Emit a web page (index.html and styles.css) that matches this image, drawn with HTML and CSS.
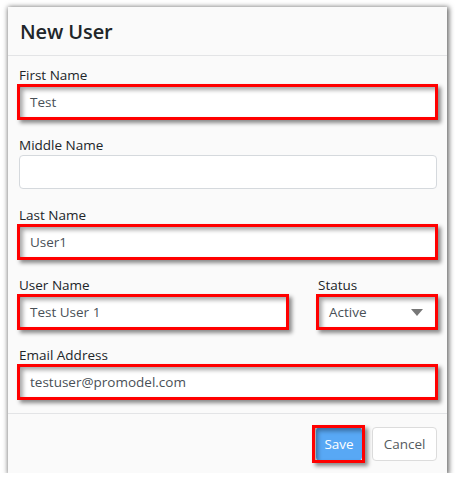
FILE: index.html
```html
<!DOCTYPE html>
<html lang="en">
<head>
<meta charset="utf-8">
<title>New User</title>
<link rel="stylesheet" href="styles.css">
</head>
<body>
<div class="modal">
  <div class="modal-header">
    <h5 class="modal-title">New User</h5>
  </div>
  <div class="modal-body">
    <div class="group">
      <label class="label">First Name</label>
      <div class="mark"><div class="field">Test</div></div>
    </div>
    <div class="group">
      <label class="label">Middle Name</label>
      <div class="field"></div>
    </div>
    <div class="group">
      <label class="label">Last Name</label>
      <div class="mark"><div class="field">User1</div></div>
    </div>
    <div class="group row">
      <div class="col">
        <label class="label">User Name</label>
        <div class="mark"><div class="field">Test User 1</div></div>
      </div>
      <div class="col">
        <label class="label">Status</label>
        <div class="mark"><div class="field select"><span>Active</span><span class="caret"></span></div></div>
      </div>
    </div>
    <div class="group">
      <label class="label">Email Address</label>
      <div class="mark"><div class="field">testuser@promodel.com</div></div>
    </div>
  </div>
  <div class="modal-footer">
    <div class="mark mark-btn"><button class="btn btn-save">Save</button></div>
    <button class="btn btn-cancel">Cancel</button>
  </div>
</div>
</body>
</html>
```

FILE: styles.css
```css
* { box-sizing: border-box; }

body {
  margin: 0;
  background: #ffffff;
  font-family: "Open Sans", "Noto Sans", sans-serif;
  color: #212529;
}

.modal {
  margin: 7px 0 0 8px;
  width: 439px;
  height: 466px;
  background: #fafafa;
  box-shadow: 1px 1px 5px 1px rgba(0, 0, 0, 0.6);
  display: flex;
  flex-direction: column;
}

.modal-header {
  height: 49px;
  border-bottom: 1px solid #e3e4e6;
  display: flex;
  align-items: center;
  padding: 0 12px;
}

.modal-title {
  margin: 0;
  font-size: 20px;
  font-weight: 600;
  color: #212529;
  letter-spacing: -0.1px;
}

.modal-body {
  padding: 9px 10px 14px 11px;
  display: flex;
  flex-direction: column;
  gap: 16px;
  border-bottom: 1px solid #e3e4e6;
}

.label {
  display: block;
  height: 20px;
  line-height: 20px;
  font-size: 13.5px;
  color: #212529;
}

.row {
  display: grid;
  grid-template-columns: 269px 1fr;
  column-gap: 30px;
}

.field {
  height: 34px;
  background: #ffffff;
  border: 1px solid #d5d9dd;
  border-radius: 4px;
  padding: 0 10px;
  display: flex;
  align-items: center;
  font-size: 13.5px;
  color: #495057;
}

.select {
  justify-content: space-between;
  padding-right: 13px;
}

.caret {
  width: 0;
  height: 0;
  border-left: 6px solid transparent;
  border-right: 6px solid transparent;
  border-top: 7px solid #777777;
}

.mark {
  position: relative;
}

.mark::after {
  content: "";
  position: absolute;
  top: -1px;
  left: -2px;
  right: -1px;
  bottom: -1px;
  border: 3px solid #ff0000;
  box-shadow: 3px 3px 4px rgba(0, 0, 0, 0.45), inset 3px 3px 4px rgba(0, 0, 0, 0.35);
  pointer-events: none;
}

.modal-footer {
  flex: 1;
  display: flex;
  justify-content: flex-end;
  align-items: center;
  gap: 10px;
  padding: 0 10px 0 0;
}

.btn {
  height: 34px;
  font-family: "Open Sans", "Noto Sans", sans-serif;
  font-size: 13.5px;
  border-radius: 4px;
  padding: 0 11px;
  border: 1px solid #dcdcdc;
}

.btn-save {
  background: #58a8f5;
  border-color: #58a8f5;
  color: #ffffff;
  width: 46px;
  padding: 0;
}

.mark-btn::after {
  top: -2px;
  left: -4px;
  right: -3px;
  bottom: -2px;
}

.btn-cancel {
  background: #ffffff;
  color: #555b60;
  width: 65px;
  padding: 0;
}
```
